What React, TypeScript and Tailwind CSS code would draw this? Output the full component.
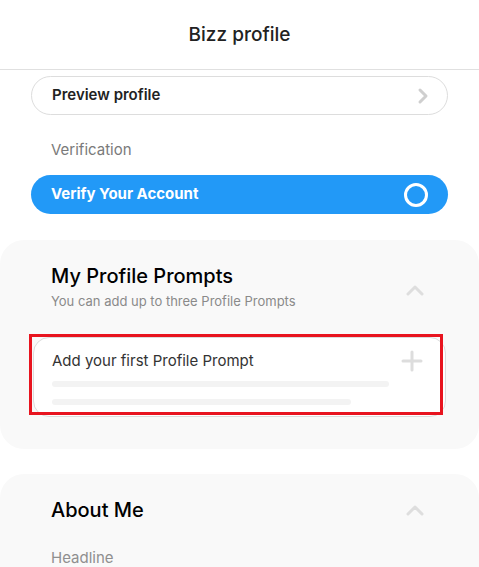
import React from 'react';

const font = { fontFamily: 'Inter, "Open Sans", sans-serif' };

const ChevronUp = () => (
  <svg width="20" height="12" viewBox="0 0 20 12" fill="none">
    <path d="M3 10 L10 3 L17 10" stroke="#dedede" strokeWidth="3" strokeLinecap="round" strokeLinejoin="round" />
  </svg>
);

const App = () => {
  return (
    <div className="w-[479px] h-[567px] overflow-hidden bg-white text-[#1a1a1a]" style={font}>
      {/* header */}
      <div className="h-[70px] flex items-center justify-center border-b border-[#e0e0e0] pt-[1px]">
        <h1 className="text-[19px] font-medium text-[#222]">Bizz profile</h1>
      </div>

      <div className="px-[31px] pt-[6px]">
        <button className="w-full h-[39px] rounded-full border border-[#dddddd] flex items-center justify-between pl-[20px] pr-[18px]">
          <span className="text-[15px] font-semibold text-[#222]">Preview profile</span>
          <svg width="12" height="18" viewBox="0 0 12 18" fill="none">
            <path d="M3 3 L9 9 L3 15" stroke="#cfcfcf" strokeWidth="3" strokeLinecap="round" strokeLinejoin="round" />
          </svg>
        </button>

        <div className="pl-[20px] pt-[25px] pb-[15px] text-[15px] leading-[20px] text-[#7a7a7a]">Verification</div>

        <button className="w-full h-[39px] rounded-full bg-[#2299f7] flex items-center justify-between pl-[20px] pr-[20px]">
          <span className="text-[15px] font-bold text-white">Verify Your Account</span>
          <span className="w-[24px] h-[24px] rounded-full border-[3px] border-white" />
        </button>
      </div>

      {/* prompts section */}
      <section className="mt-[26px] rounded-[24px] bg-[#f9f9f9] pt-[23px] pb-[32px]">
        <div className="flex items-center justify-between pl-[51px] pr-[54px]">
          <div>
            <h2 className="text-[20px] font-medium leading-[26px] text-black">My Profile Prompts</h2>
            <p className="text-[13px] leading-[18px] mt-[3px] text-[#8a8a8a]">You can add up to three Profile Prompts</p>
          </div>
          <div className="mt-[6px]">
            <ChevronUp />
          </div>
        </div>

        <div className="relative mx-[33px] mt-[27px]">
          <div className="h-[80px] rounded-[16px] border border-[#dcdcdc] bg-white pl-[18px] pr-[22px] pt-[12px]">
            <div className="flex items-center justify-between">
              <span className="text-[15px] text-[#333]">Add your first Profile Prompt</span>
              <svg width="22" height="22" viewBox="0 0 22 22" fill="none">
                <path d="M11 2 V20 M2 11 H20" stroke="#dddddd" strokeWidth="3" strokeLinecap="round" />
              </svg>
            </div>
            <div className="mt-[8px] h-[6px] w-[337px] rounded-full bg-[#f3f3f3]" />
            <div className="mt-[12px] h-[6px] w-[299px] rounded-full bg-[#f3f3f3]" />
          </div>
          <div className="absolute left-[-4px] top-[-3px] w-[414px] h-[81px] border-[3px] border-[#e8141f] pointer-events-none" />
        </div>
      </section>

      {/* about me */}
      <section className="mt-[25px] rounded-[24px] bg-[#f9f9f9] pt-[23px] pb-[32px]">
        <div className="flex items-center justify-between pl-[51px] pr-[54px]">
          <h2 className="text-[20px] font-medium leading-[26px] text-black">About Me</h2>
          <ChevronUp />
        </div>
        <div className="pl-[51px] pt-[25px] text-[15px] leading-[20px] text-[#8f8f8f]">Headline</div>
      </section>
    </div>
  );
};

export default App;
